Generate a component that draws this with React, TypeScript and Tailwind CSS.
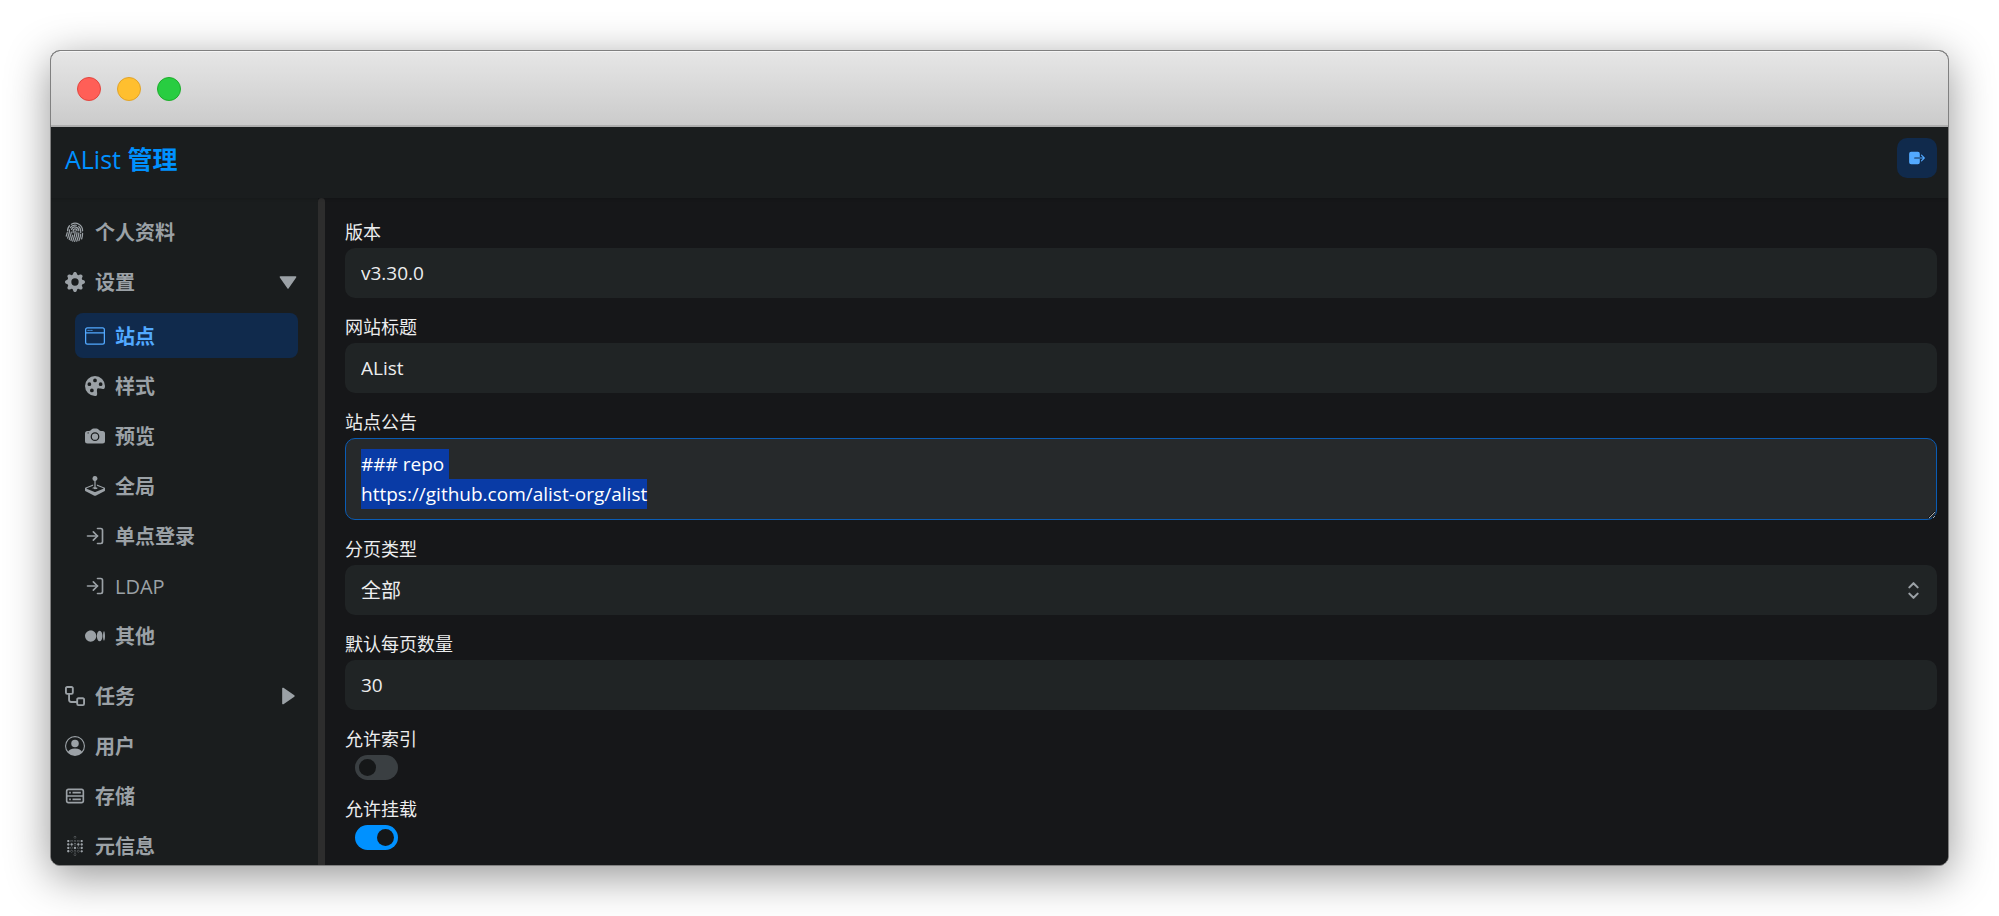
import { useEffect, useRef, useState } from "react";
import type { ComponentType, ReactNode } from "react";
import { BiSolidDownArrow, BiSolidRightArrow } from "react-icons/bi";
import {
  BsCameraFill,
  BsFingerprint,
  BsGearFill,
  BsJoystick,
  BsMedium,
  BsPaletteFill,
  BsPersonCircle,
  BsWindow,
} from "react-icons/bs";
import { CgDatabase } from "react-icons/cg";
import { FiLogIn } from "react-icons/fi";
import { IoExit } from "react-icons/io5";
import { SiMetabase } from "react-icons/si";
import { TbSelector } from "react-icons/tb";
import clsx from "clsx";

// the 16px octicon, react-icons only ships the thinner 24px one
const WorkflowIcon = ({ className }: { className?: string }) => (
  <svg viewBox="0 0 16 16" fill="currentColor" className={className}>
    <path
      fillRule="evenodd"
      d="M0 1.75C0 .784.784 0 1.75 0h3.5C6.216 0 7 .784 7 1.75v3.5A1.75 1.75 0 0 1 5.25 7H4v4a1 1 0 0 0 1 1h4v-1.25C9 9.784 9.784 9 10.75 9h3.5c.966 0 1.75.784 1.75 1.75v3.5A1.75 1.75 0 0 1 14.25 16h-3.5A1.75 1.75 0 0 1 9 14.25v-.75H5A2.5 2.5 0 0 1 2.5 11V7h-.75A1.75 1.75 0 0 1 0 5.25Zm1.75-.25a.25.25 0 0 0-.25.25v3.5c0 .138.112.25.25.25h3.5a.25.25 0 0 0 .25-.25v-3.5a.25.25 0 0 0-.25-.25Zm9 9a.25.25 0 0 0-.25.25v3.5c0 .138.112.25.25.25h3.5a.25.25 0 0 0 .25-.25v-3.5a.25.25 0 0 0-.25-.25Z"
    />
  </svg>
);

type MenuItem = {
  title: string;
  icon: ComponentType<{ className?: string }>;
  to: string;
  latin?: boolean;
  children?: MenuItem[];
};

const menuItems: MenuItem[] = [
  { title: "个人资料", icon: BsFingerprint, to: "#profile" },
  {
    title: "设置",
    icon: BsGearFill,
    to: "#settings",
    children: [
      { title: "站点", icon: BsWindow, to: "#site" },
      { title: "样式", icon: BsPaletteFill, to: "#style" },
      { title: "预览", icon: BsCameraFill, to: "#preview" },
      { title: "全局", icon: BsJoystick, to: "#global" },
      { title: "单点登录", icon: FiLogIn, to: "#sso" },
      { title: "LDAP", icon: FiLogIn, to: "#ldap", latin: true },
      { title: "其他", icon: BsMedium, to: "#other" },
    ],
  },
  { title: "任务", icon: WorkflowIcon, to: "#tasks", children: [] },
  { title: "用户", icon: BsPersonCircle, to: "#users" },
  { title: "存储", icon: CgDatabase, to: "#storages" },
  { title: "元信息", icon: SiMetabase, to: "#metas" },
];

const rowClass =
  "flex h-[45px] w-full shrink-0 items-center gap-[10px] rounded-lg px-[10px] text-xl font-bold";

const MenuLink = ({ item, active }: { item: MenuItem; active?: boolean }) => {
  const Icon = item.icon;
  return (
    <a
      href={item.to}
      className={clsx(
        rowClass,
        active ? "bg-[#102a4c] text-[#52a9ff]" : "text-[#9ba1a6]"
      )}
    >
      <Icon className="size-5 shrink-0" />
      <span className={clsx("pt-0.5", item.latin && "font-medium")}>
        {item.title}
      </span>
    </a>
  );
};

const MenuGroup = ({ item }: { item: MenuItem }) => {
  const [open, setOpen] = useState(item.children!.length > 0);
  const Icon = item.icon;
  const Arrow = open ? BiSolidDownArrow : BiSolidRightArrow;
  return (
    <>
      <button
        type="button"
        aria-expanded={open}
        onClick={() => setOpen(!open)}
        className={clsx(rowClass, "text-[#9ba1a6]")}
      >
        <Icon className="size-5 shrink-0" />
        <span className="grow pt-0.5 text-left">{item.title}</span>
        <Arrow className="size-5 shrink-0" />
      </button>
      {open && (
        <div className="flex flex-col gap-[5px] pt-1 pr-[10px] pb-[10px] pl-5">
          {item.children!.map((child) => (
            <MenuLink
              key={child.title}
              item={child}
              active={child.to === "#site"}
            />
          ))}
        </div>
      )}
    </>
  );
};

const SideMenu = () => (
  <nav className="flex w-[267px] shrink-0 flex-col gap-[5px] overflow-hidden bg-[#1a1d1e] pt-[11px] pr-[10px] pl-1">
    {menuItems.map((item) =>
      item.children ? (
        <MenuGroup key={item.title} item={item} />
      ) : (
        <MenuLink key={item.title} item={item} />
      )
    )}
  </nav>
);

const fieldClass =
  "block h-[50px] w-full rounded-[10px] bg-[#202425] px-4 text-[#ecedee] outline-none";

const Field = ({
  id,
  label,
  children,
}: {
  id: string;
  label: string;
  children: ReactNode;
}) => (
  <div className="flex shrink-0 flex-col items-start">
    <label htmlFor={id} className="pb-1.5 text-lg/5 text-[#ecedee]">
      {label}
    </label>
    {children}
  </div>
);

const TextField = (props: { id: string; label: string; value: string }) => (
  <Field id={props.id} label={props.label}>
    <input
      id={props.id}
      type="text"
      defaultValue={props.value}
      className={clsx(fieldClass, "text-[19px] font-medium")}
    />
  </Field>
);

const SwitchField = (props: { id: string; label: string; on?: boolean }) => (
  <Field id={props.id} label={props.label}>
    <input
      id={props.id}
      type="checkbox"
      role="switch"
      defaultChecked={props.on}
      className="ml-[10px] flex h-[25px] w-[43px] appearance-none items-center rounded-full bg-[#3a3f42] px-1 before:size-[17px] before:rounded-full before:bg-[#151718] checked:justify-end checked:bg-[#0091ff]"
    />
  </Field>
);

const Announcement = () => {
  const ref = useRef<HTMLTextAreaElement>(null);

  useEffect(() => {
    ref.current?.focus();
    ref.current?.select();
  }, []);

  return (
    <Field id="announcement" label="站点公告">
      <textarea
        id="announcement"
        ref={ref}
        rows={2}
        spellCheck={false}
        defaultValue={"### repo\nhttps://github.com/alist-org/alist"}
        className="block h-[82px] w-full resize-y rounded-[10px] border border-[#0a5cb5] bg-[#26292b] px-[15px] py-[10px] text-[19px]/[30px] font-medium text-[#ecedee] outline-none [color-scheme:dark] selection:bg-[#093ba6] selection:text-white"
      />
    </Field>
  );
};

const SiteSettings = () => (
  <main className="flex min-w-0 grow flex-col gap-[19px] overflow-hidden bg-[#161719] pt-6 pr-[11px] pl-5">
    <TextField id="version" label="版本" value="v3.30.0" />
    <TextField id="site_title" label="网站标题" value="AList" />
    <Announcement />
    <Field id="pagination_type" label="分页类型">
      <div className="relative w-full">
        <select
          id="pagination_type"
          defaultValue="all"
          className={clsx(fieldClass, "appearance-none pt-0.5 text-xl")}
        >
          <option value="all">全部</option>
          <option value="pagination">分页</option>
          <option value="load_more">加载更多</option>
        </select>
        <TbSelector className="pointer-events-none absolute inset-y-0 right-[11px] my-auto size-[25px] text-[#9ba1a6]" />
      </div>
    </Field>
    <TextField id="default_page_size" label="默认每页数量" value="30" />
    <SwitchField id="allow_indexed" label="允许索引" />
    <SwitchField id="allow_mounted" label="允许挂载" on />
  </main>
);

const TitleBar = () => (
  <div className="flex h-[76px] shrink-0 items-center gap-4 border-t border-b-2 border-t-[#f5f5f5] border-b-[#b0b0b0] bg-linear-to-b from-[#e6e6e6] to-[#cbcbcb] px-[26px]">
    <span className="size-6 rounded-full border border-[#e2463f] bg-[#ff5f57]" />
    <span className="size-6 rounded-full border border-[#e1a32a] bg-[#ffbf2f]" />
    <span className="size-6 rounded-full border border-[#1dad2b] bg-[#28cd41]" />
  </div>
);

const Header = () => (
  <header className="z-10 flex h-[71px] shrink-0 items-start justify-between bg-[#1a1d1e] pt-[11px] pr-[11px] pl-[14px] shadow-sm">
    <h1 className="text-[25px]/[42px] font-medium text-[#0091ff]">
      AList <b>管理</b>
    </h1>
    <button
      type="button"
      aria-label="退出登录"
      className="flex size-10 items-center justify-center rounded-[10px] bg-[#102a4c] text-[#52a9ff]"
    >
      <IoExit className="size-[18px]" />
    </button>
  </header>
);

export default function App() {
  return (
    <div className="flex h-screen bg-white p-[50px] font-['Open_Sans','Noto_Sans_CJK_SC',sans-serif]">
      <div className="flex grow flex-col overflow-hidden rounded-[10px] border border-[#808080] bg-[#161719] shadow-[0_10px_44px_rgba(0,0,0,0.42)]">
        <TitleBar />
        <Header />
        <div className="flex min-h-0 grow">
          <SideMenu />
          <div className="w-[7px] shrink-0 rounded-t-sm bg-[#2d2d2d]" />
          <SiteSettings />
        </div>
      </div>
    </div>
  );
}
